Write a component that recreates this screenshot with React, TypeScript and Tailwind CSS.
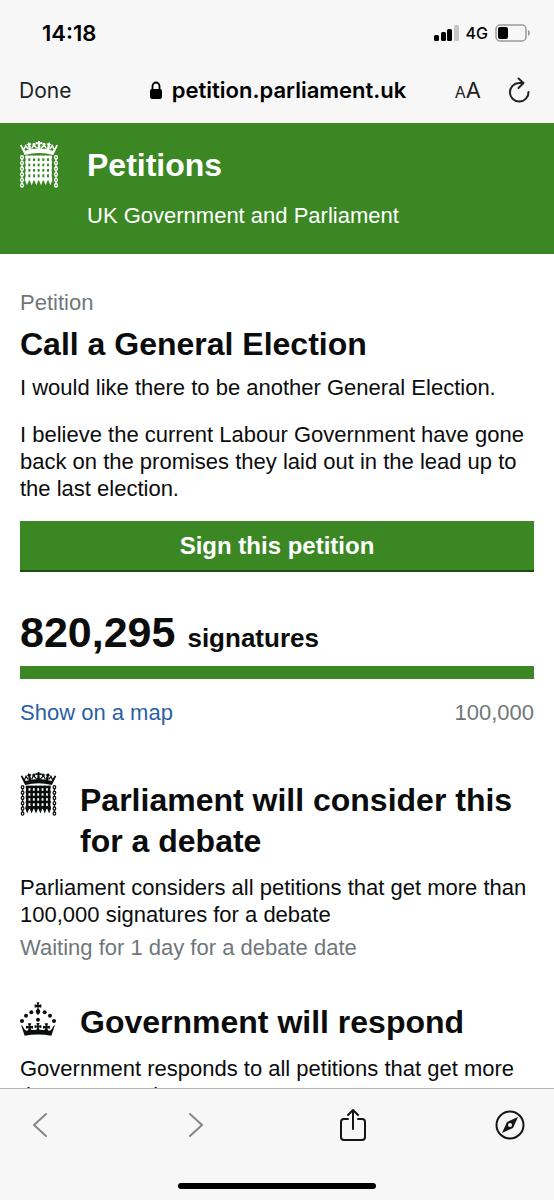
import type { ReactNode } from 'react'

const BARS = [21, 35, 49, 63, 77, 91]
const RAILS = [48, 64, 80, 96]
const LINKS = [50, 67, 84, 101, 118, 134]

function Portcullis({ className }: { className?: string }) {
  return (
    <svg viewBox="0 0 114 141" className={className} fill="currentColor" aria-hidden="true">
      {/* crown */}
      <path d="M14 42L3 19 0 13 5 11 8 17 16 29Q57 16 98 29L106 17 109 11 114 13 111 19 100 42Q57 30 14 42Z" />
      <path d="M26 29 24 13 19 11 23 8 26 3 30 7 35 8 31 13 34 27ZM88 29 90 13 95 11 91 8 88 3 84 7 79 8 83 13 80 27Z" />
      <path d="M52 26 54 10H47V4H54V0H60V4H67V10H60L62 26Z" />
      <g className="fill-none stroke-current" strokeWidth="4">
        <path d="M12 25 17 14 24 24M35 23 41 12 51 22M63 22 73 12 79 23M90 24 97 14 102 25" />
        <circle cx="42" cy="10" r="3" />
        <circle cx="72" cy="10" r="3" />
      </g>
      {/* grille */}
      {BARS.map((x) => (
        <path key={x} d={`M${x - 4} 44H${x + 4}V108L${x + 6} 118L${x} 133L${x - 6} 118L${x - 4} 108Z`} />
      ))}
      {RAILS.map((y) => (
        <rect key={y} x="16" y={y - 4} width="80" height="8" />
      ))}
      <rect x="16" y="109" width="80" height="9" />
      {/* chains */}
      <g className="fill-none stroke-current" strokeWidth="4">
        {LINKS.map((y) => (
          <g key={y}>
            <rect x="2" y={y - 6} width="8" height="10" rx="4" />
            <rect x="104" y={y - 6} width="8" height="10" rx="4" />
            {y < 130 && <path d={`M6 ${y + 3}v9M108 ${y + 3}v9`} />}
          </g>
        ))}
      </g>
    </svg>
  )
}

function Crown({ className }: { className?: string }) {
  return (
    <svg viewBox="0 0 108 102" className={className} fill="currentColor" aria-hidden="true">
      <path d="M50 1h8l-2 8 8-2v10l-8-2v6c6 3 6 9 2 14l-4 4-4-4c-4-5-4-11 2-14v-6l-8 2V7l8 2z" />
      {[[34, 31], [74, 31], [18, 41], [90, 41], [6, 57], [102, 57], [54, 53]].map(([cx, cy]) => (
        <circle key={`${cx}-${cy}`} cx={cx} cy={cy} r="6" />
      ))}
      {/* base with its crosses */}
      <path d="M14 101 3 69Q10 72 12 80L18 86Q54 80 90 86L96 80Q98 72 105 69L94 101Q54 94 14 101Z" />
      <path d="M23 88 26 78 18 80V71L26 73 24 64H34L31 73 39 71V80L32 78 36 88Z" />
      <path d="M48 88 52 76 44 79V69L52 71 49 63H59L56 71 64 69V79L56 76 60 88Z" />
      <path d="M72 88 76 78 69 80V71L77 73 74 64H84L82 73 90 71V80L82 78 85 88Z" />
    </svg>
  )
}

function StatusBar() {
  return (
    <div className="flex h-[66px] items-center justify-between pl-[42px] pr-6">
      <span className="text-[22px] font-semibold">14:18</span>
      <div className="flex items-center gap-[7px]">
        <svg width="25" height="16" viewBox="0 0 25 16" aria-hidden="true">
          <rect x="0" y="10" width="5" height="6" rx="1.500" />
          <rect x="7" y="7" width="5" height="9" rx="1.500" />
          <rect x="13" y="4" width="5" height="12" rx="1.500" />
          <rect x="20" y="0" width="5" height="16" rx="1.500" fill="#c6c6c8" />
        </svg>
        <span className="text-base font-medium">4G</span>
        <svg width="35" height="18" viewBox="0 0 35 18" aria-hidden="true">
          <rect x="1" y="1" width="30" height="16" rx="4" fill="none" stroke="#9a9a9c" strokeWidth="1.500" />
          <rect x="3" y="3" width="10" height="12" rx="2" />
          <path d="M33 6v6q2-1 2-3t-2-3z" fill="#9a9a9c" />
        </svg>
      </div>
    </div>
  )
}

function AddressBar() {
  return (
    <nav className="mb-[9px] flex h-12 items-center justify-between pl-[19px] pr-6">
      <button className="text-[21px] text-[#222]">Done</button>
      <div className="flex items-center gap-[10px] pl-[30px]">
        <svg width="12" height="18" viewBox="0 0 12 18" aria-hidden="true">
          <rect x="0" y="8" width="12" height="10" rx="2" />
          <path d="M2.500 9V5a3.500 3.500 0 0 1 7 0v4" fill="none" stroke="#000" strokeWidth="1.800" />
        </svg>
        <span className="text-[22px] font-semibold">petition.parliament.uk</span>
      </div>
      <div className="flex items-center gap-[27px]">
        <button aria-label="Text size" className="flex items-baseline text-[#222]">
          <span className="text-base">A</span>
          <span className="text-[22px]">A</span>
        </button>
        <button aria-label="Reload">
          <svg width="22" height="26" viewBox="0 0 22 26" className="fill-none stroke-[#222]" strokeWidth="2" strokeLinecap="round" strokeLinejoin="round">
            <path d="M15 6H11A9.300 9.300 0 1 0 20.500 15M10.500 1.500 15.500 6 10.500 11" />
          </svg>
        </button>
      </div>
    </nav>
  )
}

function Milestone({ icon, title, children }: { icon: ReactNode; title: string; children: ReactNode }) {
  return (
    <section>
      <div className="flex items-start">
        <div className="w-[60px] shrink-0">{icon}</div>
        <h2 className="pt-2 text-[32px] font-bold leading-[41px]">{title}</h2>
      </div>
      <div className="mt-3">{children}</div>
    </section>
  )
}

function Toolbar() {
  return (
    <footer className="flex h-[112px] shrink-0 flex-col items-center justify-between border-t border-[#b8b8ba] bg-[#f7f7f8] pb-[11px]">
      <div className="flex w-full items-center justify-between pl-6 pr-[29px] pt-[19px]">
        <button aria-label="Back" className="flex w-[30px] justify-center">
          <svg width="15" height="26" viewBox="0 0 15 26" className="fill-none stroke-[#858587]" strokeWidth="2" strokeLinecap="round" strokeLinejoin="round">
            <path d="M14 2 2 13l12 11" />
          </svg>
        </button>
        <button aria-label="Forward" className="flex w-[30px] justify-center">
          <svg width="15" height="26" viewBox="0 0 15 26" className="fill-none stroke-[#858587]" strokeWidth="2" strokeLinecap="round" strokeLinejoin="round">
            <path d="M1 2l12 11L1 24" />
          </svg>
        </button>
        <button aria-label="Share" className="flex w-[30px] justify-center">
          <svg width="26" height="34" viewBox="0 0 26 34" className="fill-none stroke-[#151515]" strokeWidth="2" strokeLinecap="round" strokeLinejoin="round">
            <path d="M8 11H4Q1 11 1 14V29Q1 32 4 32H22Q25 32 25 29V14Q25 11 22 11H18M13 21V2M8 7l5-5 5 5" />
          </svg>
        </button>
        <button aria-label="Open in Safari">
          <svg width="30" height="30" viewBox="0 0 30 30" aria-hidden="true">
            <circle cx="15" cy="15" r="13.500" fill="none" stroke="#151515" strokeWidth="2" />
            <path d="M23 7 18 18 7 23 12 12Z" fill="#151515" />
            <circle cx="15" cy="15" r="2" fill="#f7f7f8" />
          </svg>
        </button>
      </div>
      <div className="h-[6px] w-[198px] rounded-full bg-black" />
    </footer>
  )
}

export default function App() {
  return (
    <div className="flex h-screen flex-col overflow-hidden bg-white font-['Liberation_Sans',Arial,sans-serif] text-[22px] leading-[27px] text-[#0b0c0c]">
      <div className="shrink-0 bg-[#f7f7f8] font-['Inter',sans-serif] text-black">
        <StatusBar />
        <AddressBar />
      </div>

      <div className="min-h-0 flex-1 overflow-hidden">
        <header className="flex items-start bg-[#3b8724] px-5 pb-[25px] pt-[18px] text-white">
          <Portcullis className="h-[47px] w-[38px]" />
          <div className="pl-[29px]">
            <a href="#" className="block pt-1 text-[32px] font-bold leading-[41px]">Petitions</a>
            <p className="mt-4">UK Government and Parliament</p>
          </div>
        </header>

        <main className="px-5 pt-[35px]">
          <p className="text-[#6f777b]">Petition</p>
          <h1 className="mt-2 text-[32px] font-bold leading-[41px]">Call a General Election</h1>
          <p className="mt-[9px]">I would like there to be another General Election.</p>
          <p className="mt-5">
            I believe the current Labour Government have gone back on the promises they laid out in the lead up to the last election.
          </p>
          <button className="mt-[19px] block w-full border-b-2 border-[#1f4a12] bg-[#3b8724] py-[11px] text-2xl font-bold leading-[27px] text-white">
            Sign this petition
          </button>

          <p className="mt-[34px] flex items-baseline gap-3 font-bold">
            <span className="text-[43px] leading-[52px]">820,295</span>
            <span className="text-[26px]">signatures</span>
          </p>
          <div className="mt-2 h-[13px] bg-[#3b8724]" />
          <div className="mt-5 flex justify-between">
            <a href="#" className="text-[#2b5fa6]">Show on a map</a>
            <span className="text-[#6f777b]">100,000</span>
          </div>

          <div className="mt-[46px] flex flex-col gap-[33px]">
            <Milestone
              title="Parliament will consider this for a debate"
              icon={<Portcullis className="h-[44px] w-[37px]" />}
            >
              <p>Parliament considers all petitions that get more than 100,000 signatures for a debate</p>
              <p className="mt-[6px] text-[#6f777b]">Waiting for 1 day for a debate date</p>
            </Milestone>
            <Milestone title="Government will respond" icon={<Crown className="mt-2 h-[34px] w-[36px]" />}>
              <p>Government responds to all petitions that get more than 10,000 signatures</p>
            </Milestone>
          </div>
        </main>
      </div>

      <Toolbar />
    </div>
  )
}
